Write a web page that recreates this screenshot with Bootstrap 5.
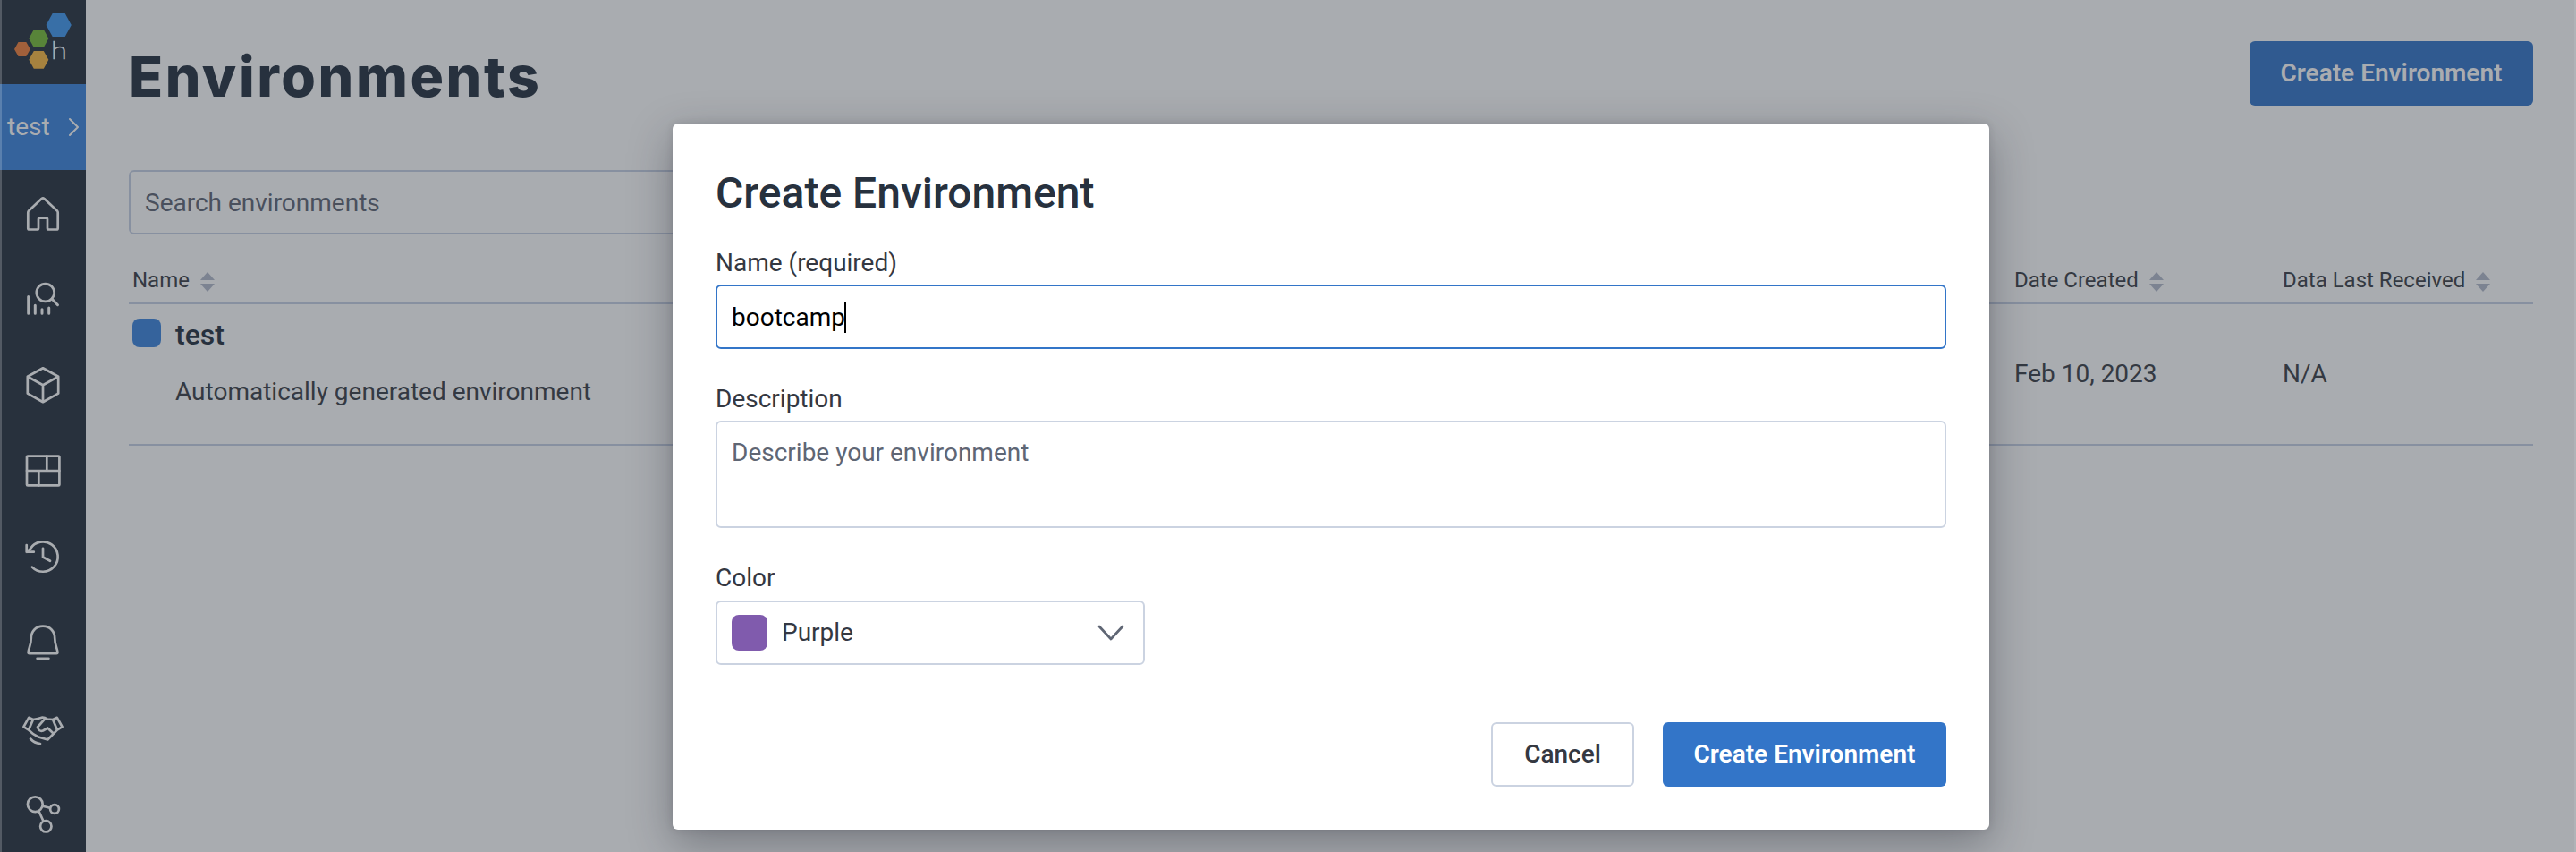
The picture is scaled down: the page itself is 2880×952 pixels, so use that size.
<!DOCTYPE html>
<html lang="en">
<head>
<meta charset="utf-8">
<title>Environments</title>
<link href="https://cdn.jsdelivr.net/npm/bootstrap@5.3.0/dist/css/bootstrap.min.css" rel="stylesheet">
<style>
  body { font: 400 28px/34px Roboto, sans-serif; color: #343942; background: #a9acb0; height: 952px; overflow: hidden; }
  .sidebar { width: 96px; background: #28313d; border-left: 2px solid #535a64; }
  .sidebar .nav-link { width: 96px; height: 96px; flex-shrink: 0; margin-left: -2px; color: #a9acb0; padding: 0; }
  .sidebar .nav-link svg { width: 48px; height: 48px; fill: none; stroke: currentColor; stroke-width: 2.7; stroke-linecap: round; stroke-linejoin: round; }
  .brand { height: 94px; margin-left: -2px; width: 96px; flex-shrink: 0; }
  .env-switch { height: 96px; flex-shrink: 0; background: #35639c; color: #a9acb0; padding: 0 8px 0 6px; border-left: 2px solid #5a80ae; margin-left: -2px; }
  .page { padding: 46px 46px 0 48px; border-right: 2px solid #b0b3b7; }
  .page-head { height: 72px; }
  h1 { font: 800 62.500px/72px Inter, sans-serif; color: #27313e; letter-spacing: 2.600px; margin: 3px 0 0; }
  .btn { height: 72px; font-size: 28px; font-weight: 500; border-radius: 6px; padding: 0; }
  .btn-create { width: 317px; background: #3375c8; color: #fff; border: 0; font-weight: 600; }
  .btn-dimmed { background: #305a90; color: #a9acb0; }
  .btn-cancel { width: 160px; border: 2px solid #cbd3e1; color: #343842; background: #fff; }
  .form-control, .picker { border: 2px solid #cbd3e1; border-radius: 6px; font-size: 28px; line-height: 34px; padding: 17px 16px; height: 72px; background: #fff; }
  .form-control::placeholder { color: #5f6674; opacity: 1; }
  .search { width: 960px; border-color: #8790a0; background: transparent; margin-top: 72px; }
  .search::placeholder { color: #4a505d; }
  .cols { display: grid; grid-template-columns: 2104px 300px 1fr; border-bottom: 2px solid #8790a0; }
  .cols-head { height: 78px; font-size: 24px; padding: 28px 0 0 4px; line-height: 46px; }
  .cols-head svg { width: 16px; height: 24px; margin-left: 12px; fill: #7c8391; }
  .cols-row { height: 158px; padding-left: 4px; }
  .env-dot { width: 32px; height: 32px; border-radius: 8px; background: #35639c; margin: 16px 16px 0 0; }
  .env-name { font-size: 32px; line-height: 38px; font-weight: 500; color: #27313e; margin: 15px 0 28px; }
  .overlay { left: 96px; right: 0; top: 138px; }
  .dialog-box { width: 1472px; height: 789px; border: 0; border-radius: 6px; padding: 48px; background: #fff; box-shadow: 0 16px 48px rgba(30,34,44,.36), 0 0 8px rgba(30,34,44,.12); color: #343842; }
  .dialog-box h2 { font-size: 48px; line-height: 60px; font-weight: 500; color: #27313e; margin: 0 0 30px; }
  .form-label { display: block; margin: 0 0 6px; line-height: 36px; font-size: 28px; }
  .name-field { border-color: #3375c8; color: #000; margin-bottom: 38px; padding: 18px 16px 16px; }
  .caret { width: 2px; height: 34px; background: #000; margin-left: -1px; }
  textarea.form-control { height: 120px; min-height: 0; resize: none; margin-bottom: 38px; }
  .color-label { margin-bottom: 7px; }
  .picker { width: 480px; padding: 0 21px 0 16px; margin-bottom: 64px; }
  .swatch { width: 40px; height: 40px; border-radius: 8px; background: #805bad; margin-right: 16px; }
</style>
</head>
<body class="d-flex position-relative">
<nav class="sidebar d-flex flex-column flex-shrink-0">
  <a class="brand" href="#">
    <svg class="d-block" width="96" height="94">
      <polygon fill="#386fa7" points="51.6,28 58.7,15 72.7,15 79.8,28 72.7,41 58.7,41"/>
      <polygon fill="#588439" points="32.3,43 37.8,33 48.8,33 54.3,43 48.8,53 37.8,53"/>
      <polygon fill="#a1603b" points="16,55 20.5,47 29.3,47 33.8,55 29.3,63 20.5,63"/>
      <polygon fill="#a6823f" points="32.3,66.8 37.8,57 48.8,57 54.3,66.8 48.8,76.7 37.8,76.7"/>
      <text x="57" y="66" fill="#a9acb0" stroke="#a9acb0" stroke-width=".4" font-family="Lato, sans-serif" font-weight="300" font-size="27.5" textLength="18" lengthAdjust="spacingAndGlyphs">h</text>
    </svg>
  </a>
  <div class="env-switch d-flex align-items-center justify-content-between"><span>test</span>
    <svg width="12" height="22" fill="none" stroke="#a9acb0" stroke-width="2" stroke-linecap="round" stroke-linejoin="round"><path d="M2 2 11 11 2 20"/></svg>
  </div>
  <a class="nav-link d-flex align-items-center justify-content-center" href="#"><svg viewBox="0 0 48 48"><path d="M7.3 23.5Q7.3 22.3 8.2 21.4L22.5 8Q24 6.8 25.5 8L39.8 21.4Q40.7 22.3 40.7 23.5V41Q40.7 42.5 39.2 42.5H30.6Q29 42.5 29 41V31Q29 29.7 27.6 29.7H20.4Q19 29.7 19 31V41Q19 42.5 17.4 42.5H8.8Q7.3 42.5 7.3 41Z"/></svg></a>
  <a class="nav-link d-flex align-items-center justify-content-center" href="#"><svg viewBox="0 0 48 48"><circle cx="26.7" cy="17" r="9.9"/><path d="M34 24 40.5 30.7M7.7 21.5V40.2M15.3 31.3V40.2M23 35.8V40.2M30.7 34V40.2" stroke-width="3"/></svg></a>
  <a class="nav-link d-flex align-items-center justify-content-center" href="#"><svg viewBox="0 0 48 48"><path d="M24 5.3 41.2 14.8V33.6L24 43.2 6.8 33.6V14.8ZM6.8 14.8 24 24.2 41.2 14.8M24 24.2V43"/></svg></a>
  <a class="nav-link d-flex align-items-center justify-content-center" href="#"><svg viewBox="0 0 48 48"><rect x="6" y="7.6" width="36.4" height="32.8" rx="1"/><path d="M6 24H42.4M28.3 7.6V24M19.3 24V40.4"/></svg></a>
  <a class="nav-link d-flex align-items-center justify-content-center" href="#"><svg viewBox="0 0 48 48"><path d="M11.9 35.6A16.7 16.7 0 1 0 9.8 15.2L6 18.7M5.7 11V18.7H13.8M24 14.8V24.5L32 28.8"/></svg></a>
  <a class="nav-link d-flex align-items-center justify-content-center" href="#"><svg viewBox="0 0 48 48"><path d="M24 5.7C15.5 5.7 10.8 12 10.8 19 10.8 27 7.8 30.5 7.6 34.8Q7.6 36.1 8.8 36.1H39.2Q40.4 36.1 40.4 34.8C40.2 30.5 37.2 27 37.2 19 37.2 12 32.5 5.7 24 5.7ZM17.6 41.8H30.4"/></svg></a>
  <a class="nav-link d-flex align-items-center justify-content-center" href="#"><svg viewBox="0 0 48 48"><path d="M8.2 11.8 2.4 22.2 8 25.6 13 14ZM39.8 11.8 45.6 22.2 40 25.6 35 14ZM13 14Q18.5 13.2 23.5 11.5Q26 11.5 29 13.5L35 14M8 25.6Q13 31 19 33.5L29.3 36.5 40 25.6M26.5 12.8 18 22.5Q19.5 28 24 26.5L29.3 23.5 35.6 29.5M10 35.5Q14.5 40.5 21 41"/></svg></a>
  <a class="nav-link d-flex align-items-center justify-content-center" href="#"><svg viewBox="0 0 48 48"><circle cx="15.3" cy="12.7" r="8.4"/><circle cx="37" cy="18" r="4.9"/><circle cx="27.3" cy="37.3" r="6.2"/><path d="M23.7 14.7 32 16.7M19.4 20.3 24.5 31.5"/></svg></a>
</nav>

<main class="page flex-grow-1">
  <div class="page-head d-flex justify-content-between align-items-start">
    <h1>Environments</h1>
    <button class="btn btn-create btn-dimmed">Create Environment</button>
  </div>
  <input class="form-control search" placeholder="Search environments">
  <div class="cols cols-head">
    <div>Name<svg viewBox="0 0 16 24"><path d="M8 1 16 10H0ZM8 23 16 14H0Z"/></svg></div>
    <div>Date Created<svg viewBox="0 0 16 24"><path d="M8 1 16 10H0ZM8 23 16 14H0Z"/></svg></div>
    <div>Data Last Received<svg viewBox="0 0 16 24"><path d="M8 1 16 10H0ZM8 23 16 14H0Z"/></svg></div>
  </div>
  <div class="cols cols-row">
    <div class="d-flex">
      <div class="env-dot"></div>
      <div><div class="env-name">test</div><div>Automatically generated environment</div></div>
    </div>
    <div class="align-self-center">Feb 10, 2023</div>
    <div class="align-self-center">N/A</div>
  </div>
</main>

<div class="overlay position-absolute d-flex justify-content-center">
  <div class="dialog-box" role="dialog">
    <h2>Create Environment</h2>
    <label class="form-label">Name (required)</label>
    <div class="form-control name-field d-flex align-items-center"><span>bootcamp</span><span class="caret"></span></div>
    <label class="form-label">Description</label>
    <textarea class="form-control" placeholder="Describe your environment"></textarea>
    <label class="form-label color-label">Color</label>
    <div class="picker d-flex align-items-center">
      <span class="swatch"></span><span class="flex-grow-1">Purple</span>
      <svg width="30" height="18" fill="none" stroke="#5f6674" stroke-width="2.7" stroke-linecap="round" stroke-linejoin="round"><path d="M2 2 15 16 28 2"/></svg>
    </div>
    <div class="d-flex justify-content-end gap-4">
      <button class="btn btn-cancel me-2">Cancel</button>
      <button class="btn btn-create">Create Environment</button>
    </div>
  </div>
</div>
<script src="https://cdn.jsdelivr.net/npm/bootstrap@5.3.0/dist/js/bootstrap.bundle.min.js"></script>
</body>
</html>
